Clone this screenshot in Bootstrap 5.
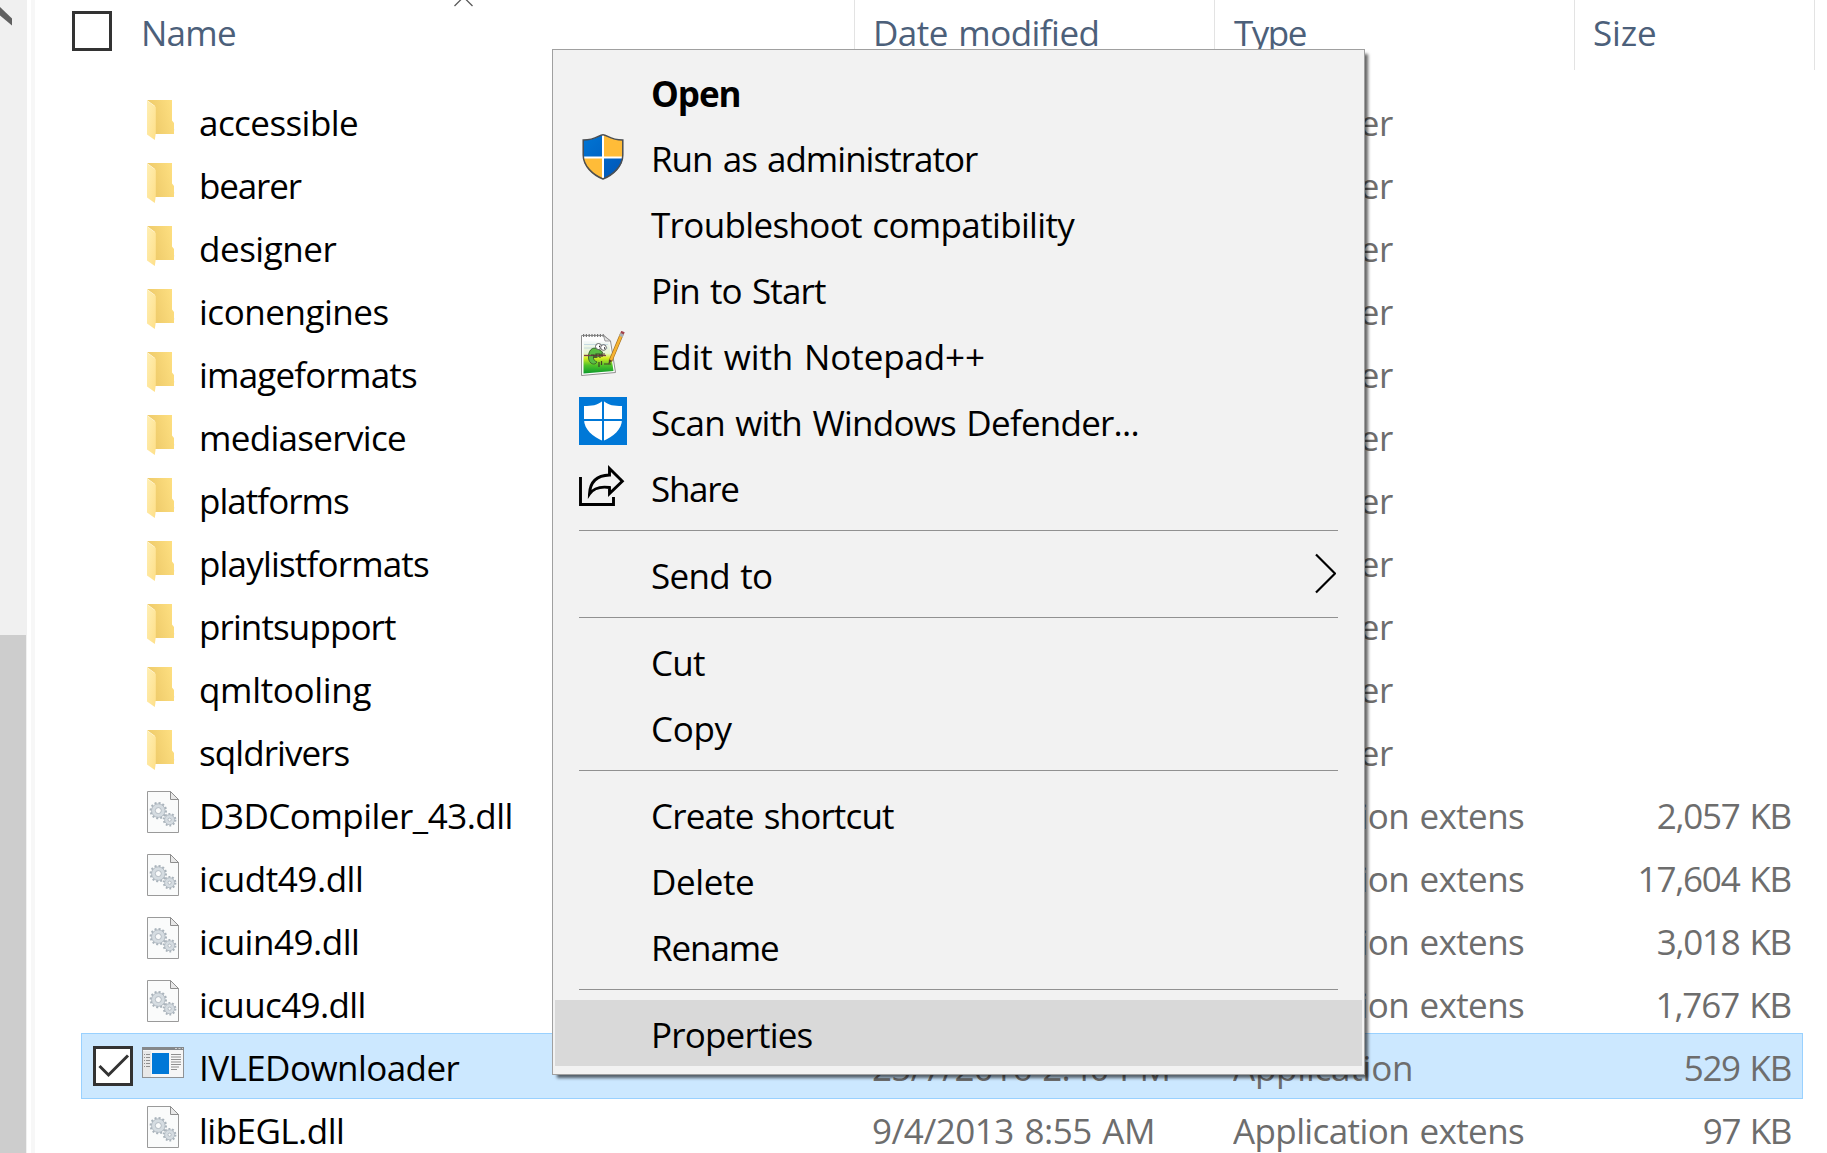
<!DOCTYPE html>
<html lang="en">
<head>
<meta charset="utf-8">
<title>File Explorer</title>
<link href="https://cdn.jsdelivr.net/npm/bootstrap@5.3.0/dist/css/bootstrap.min.css" rel="stylesheet">
<style>
body{font-family:"Open Sans","Noto Sans",sans-serif;font-size:35px;line-height:1;color:#000;background:#fff}
.window{width:1827px;height:1153px}
.track{width:27px;background:#f0f0f0}
.thumb{width:26px;height:518px;background:#cdcdcd}
.pane-edge{width:4px;margin-left:4px;background:#f7f7f7}
.t{white-space:nowrap;line-height:48px;word-spacing:2px}
.head{height:90px;color:#4c607a}
.head-cell{height:70px;border-right:1px solid #e3e3e3;padding-top:9px}
.box{width:40px;height:40px;border:3px solid #333;background:#fff}
.h-name{width:820px;padding-left:37px}
.h-date{width:360px;padding-left:18px}
.h-type{width:360px;padding-left:19px}
.h-size{width:240px;padding-left:18px}
.file{height:63px;margin-left:46px;width:1722px;padding-top:9px;border:0 solid #99d1ff}
.file.active{height:66px;margin-top:-2px;margin-bottom:-1px;background:#cce8ff;border-width:1px;padding-top:10px}
.c-check{width:61px;padding-left:12px}
.active .c-check{width:60px;padding:2px 0 0 11px}
.c-icon{width:57px;height:54px}
.c-icon svg{display:block;margin-top:-9px}
.active .c-icon svg{margin-top:-1px}
.c-name{width:673px}
.c-date{width:361px}
.c-type{width:360px;overflow:hidden}
.c-size{width:198px}
.meta{color:#6d6d6d}
.sort{left:453px;top:-5px}
.ctx{left:552px;top:49px;width:813px;height:1026px;padding:8px 2px;background:#f2f2f2;border:1px solid #a0a0a0;box-shadow:4px 4px 3px -1px rgba(0,0,0,.6)}
.item{height:66px;padding:11px 26px 0 24px}
.item.hot{background:#d9d9d9}
.slot{width:48px;height:48px;margin:-2px 24px 0 0}
.sep{height:1px;margin:10px 24px;background:#919191}
</style>
<script src="https://cdn.jsdelivr.net/npm/bootstrap@5.3.0/dist/js/bootstrap.bundle.min.js"></script>
</head>
<body>
<svg width="0" height="0" class="position-absolute">
<defs>
<linearGradient id="gBack" x1="0" x2="1" y1=".3" y2="0"><stop offset="0" stop-color="#edc968"/><stop offset="1" stop-color="#ffe183"/></linearGradient>
<linearGradient id="gFront" x1="0" x2="1" y1="0" y2="1"><stop offset="0" stop-color="#ffefb4"/><stop offset="1" stop-color="#fedf88"/></linearGradient>
<linearGradient id="gBlue" x1="0" x2="1" y1="0" y2="1"><stop offset="0" stop-color="#0078d7"/><stop offset="1" stop-color="#0052b4"/></linearGradient>
<linearGradient id="gNote" x1="0" x2="0" y1="0" y2="1"><stop offset="0" stop-color="#f4f8fb"/><stop offset=".38" stop-color="#e6f4ce"/><stop offset=".52" stop-color="#d8ee20"/><stop offset=".75" stop-color="#4fc22a"/><stop offset="1" stop-color="#0b9a2c"/></linearGradient>
<symbol id="folder" viewBox="0 0 42 54">
<path d="M8 42 L33 39.500 L31 42 L12 44Z" fill="#ececec"/>
<path d="M5 10H30V30.500L32 33V44H13V16Z" fill="url(#gBack)"/>
<path d="M5 10.500L13.800 17V43L12.800 50L5 44.500Z" fill="url(#gFront)"/>
</symbol>
<symbol id="dll" viewBox="0 0 42 54">
<path d="M5.500 8.500H28.500L36.500 16.500V49.500H5.500Z" fill="#fafbfb" stroke="#9a9a9a"/>
<path d="M28.500 8.500V16.500H36.500Z" fill="#e8e8e8" stroke="#8e8e8e"/>
<g fill="none" stroke="#a9b3bb"><circle cx="16.300" cy="27.600" r="7.600" stroke-width="2.200" stroke-dasharray="2 1.980"/><circle cx="27.600" cy="36.700" r="5.800" stroke-width="2" stroke-dasharray="1.800 1.845"/></g>
<g fill="none" stroke="#d5dce1"><circle cx="16.300" cy="27.600" r="4.900" stroke-width="4"/><circle cx="27.600" cy="36.700" r="3.300" stroke-width="3.600"/></g>
<g fill="none" stroke="#a9b3bb" stroke-width=".8"><circle cx="16.300" cy="27.600" r="6.800"/><circle cx="16.300" cy="27.600" r="3"/><circle cx="27.600" cy="36.700" r="5"/><circle cx="27.600" cy="36.700" r="1.600"/></g>
</symbol>
<symbol id="app" viewBox="0 0 42 54">
<rect x=".5" y="4.500" width="41" height="30" fill="#f6f6f6" stroke="#8f9295"/>
<path d="M0 4H42V7H0Z" fill="#85888b"/><path d="M33 5.500h2m1.500 0h2m1.500 0h1" stroke="#d0d0d0"/>
<path d="M1 8H9V34H1Z" fill="#e8e8e8"/>
<path d="M10 10H27V31H10Z" fill="#0078d7"/>
<path d="M2 11.500h1m1 0h4M2 14.500h1m1 0h4M2 17.500h1m1 0h4M2 20.500h1m1 0h4M2 23.500h1m1 0h4M29 11.500h10M29 14h10M29 16.500h10M29 19h10M29 21.500h10M29 24h8M29 26.500h6" stroke="#8f8f8f" fill="none"/>
</symbol>
</defs>
</svg>

<div class="window d-flex overflow-hidden position-relative">
  <div class="track d-flex flex-column justify-content-between flex-shrink-0">
    <svg width="14" height="30"><path d="M0 7L12 18.500V25.500L0 15.500Z" fill="#606060"/></svg>
    <div class="thumb"></div>
  </div>
  <div class="pane-edge flex-shrink-0"></div>

  <div class="flex-grow-1">
    <div class="head d-flex align-items-start">
      <div class="head-cell h-name d-flex"><div class="box" style="margin-top:2px"></div><div class="t" style="margin-left:29px"><span data-w="91">Name</span></div></div>
      <div class="head-cell h-date t"><span data-w="221.5">Date modified</span></div>
      <div class="head-cell h-type t"><span data-w="71.8">Type</span></div>
      <div class="head-cell h-size t"><span data-w="61">Size</span></div>
    </div>
    <div id="files"></div>
  </div>

  <svg class="sort position-absolute" width="22" height="12"><path d="M1.500 11L10.500 2L19.500 11" fill="none" stroke="#5a5a5a" stroke-width="1.300"/></svg>

  <div class="ctx position-absolute">
    <div class="item d-flex t fw-bold" style="padding-top:12px"><div class="slot"></div><span data-w="86.5">Open</span></div>
    <div class="item d-flex t"><svg class="slot" viewBox="0 0 48 48">
      <clipPath id="shield"><path d="M24 2C19.500 2 17.500 6.800 4 7V22C4 34 13 42 24 46C35 42 44 34 44 22V7C30.500 6.800 28.500 2 24 2Z"/></clipPath>
      <g clip-path="url(#shield)"><path d="M0 0H24V24H0ZM24 24H48V48H24Z" fill="url(#gBlue)"/><path d="M24 0H48V24H24ZM0 24H24V48H0Z" fill="#ffbc38"/><path d="M24 0V48M0 24.500H48" stroke="#fff" stroke-width="2"/></g>
      <path d="M24 1.800C19.500 1.800 17.500 7 4.200 7V22C4.200 33 14 42 24 46C34 42 43.800 33 43.800 22V7C30.500 7 28.500 1.800 24 1.800Z" fill="none" stroke="#4c4f52" stroke-width="1.500"/>
    </svg><span data-w="324">Run as administrator</span></div>
    <div class="item d-flex t"><div class="slot"></div><span data-w="424.3">Troubleshoot compatibility</span></div>
    <div class="item d-flex t"><div class="slot"></div><span data-w="172">Pin to Start</span></div>
    <div class="item d-flex t"><svg class="slot" viewBox="0 0 48 48">
      <path d="M2.500 4.500H25L31.500 10L36.500 41.500L2.500 44.500Z" fill="#fdfdfd" stroke="#8f8f8f"/>
      <path d="M4.500 10L30 11L34.500 40L4.500 42.500Z" fill="url(#gNote)"/>
      <path d="M4 4.500h21" stroke="#777" stroke-width="3" stroke-dasharray="1.200 1.600"/>
      <path d="M24.500 4.500L26 10L31.500 10Z" fill="#e4e4e4" stroke="#888" stroke-width=".8"/>
      <path d="M5 13.500h24M5 17h24" stroke="#bcd3df" stroke-width=".8"/>
      <path d="M19 18C13 15 9 20 9.500 27C10 33 16 35 18 31C16 30 14 29 14.500 26C18 27 23 25 23.500 21Z" fill="#59bd43" stroke="#3f6b2e" stroke-width="1"/>
      <g fill="#fff" stroke="#555" stroke-width=".9"><circle cx="19.500" cy="15.500" r="3"/><circle cx="24.500" cy="16.500" r="2.800"/></g><path d="M20 15.500h1M25 17h1" stroke="#222" stroke-width="1.500"/>
      <path d="M5 24.500H27" stroke="#7d3f4a" stroke-width="1.300"/>
      <path d="M12 24h3v3M17 27v-4h4v4M23 26v-3h3M20 36V31M22.500 34V30M25 33h7" fill="none" stroke="#423e28" stroke-width="1.200"/>
      <path d="M43 2.500L31.500 30" stroke="#9b6a20" stroke-width="3.800"/><path d="M43 2.500L32 29" stroke="#f7b331" stroke-width="2.600"/>
      <path d="M44 .5L43 3" stroke="#a3424c" stroke-width="3.600"/><path d="M43.200 2.800L42 5.500" stroke="#a9b1b7" stroke-width="3.800"/><path d="M30 28.500L32.800 30L29.500 33.500Z" fill="#4f4028"/>
    </svg><span data-w="330">Edit with Notepad++</span></div>
    <div class="item d-flex t"><svg class="slot" viewBox="0 0 48 48"><path d="M0 0H48V48H0Z" fill="#0078d7"/><path d="M24 3.500C18 8.500 13 9 5 9V22C5 33 14 39.500 24 44C34 39.500 43 33 43 22V9C35 9 30 8.500 24 3.500Z" fill="#fff"/><path d="M24 2V46M4 23H44" stroke="#0078d7" stroke-width="2"/></svg><span data-w="485.5">Scan with Windows Defender...</span></div>
    <div class="item d-flex t"><svg class="slot" viewBox="0 0 48 48"><g fill="none" stroke="#000" stroke-width="2.900"><path d="M1.500 14V41.500H34.500V34"/><path d="M30.500 5.500L43.300 18.300L30.500 30.500V24.500C20 23 14 26 10.500 31C11 19 18 12.500 30.500 12Z"/></g></svg><span data-w="86.2">Share</span></div>
    <div class="sep"></div>
    <div class="item d-flex t"><div class="slot"></div><span data-w="120">Send to</span><svg class="ms-auto" width="24" height="44" viewBox="-2 1 24 44"><path d="M2 3.500L21 22.500L2 41.500" fill="none" stroke="#000" stroke-width="2.200"/></svg></div>
    <div class="sep"></div>
    <div class="item d-flex t"><div class="slot"></div><span data-w="52">Cut</span></div>
    <div class="item d-flex t"><div class="slot"></div><span data-w="79.5">Copy</span></div>
    <div class="sep"></div>
    <div class="item d-flex t"><div class="slot"></div><span data-w="241">Create shortcut</span></div>
    <div class="item d-flex t"><div class="slot"></div><span data-w="99">Delete</span></div>
    <div class="item d-flex t"><div class="slot"></div><span data-w="124">Rename</span></div>
    <div class="sep"></div>
    <div class="item hot d-flex t"><div class="slot"></div><span data-w="158.500">Properties</span></div>
  </div>
</div>

<script>
// name, label width, icon, size, size width, date, date width
const files = [
  ["accessible",157,"folder"],["bearer",100.7,"folder"],["designer",136.5,"folder"],["iconengines",187.5,"folder"],
  ["imageformats",216,"folder"],["mediaservice",204,"folder"],["platforms",148,"folder"],["playlistformats",228,"folder"],
  ["printsupport",195,"folder"],["qmltooling",171.5,"folder"],["sqldrivers",149.6,"folder"],
  ["D3DCompiler_43.dll",308.6,"dll","2,057 KB",133],["icudt49.dll",160,"dll","17,604 KB",150],
  ["icuin49.dll",156,"dll","3,018 KB",133],["icuuc49.dll",162.5,"dll","1,767 KB",132],
  ["IVLEDownloader",257.5,"app","529 KB",105,"25/7/2016 2:40 PM",295.6],
  ["libEGL.dll",141,"dll","97 KB",87,"9/4/2013 8:55 AM",280]
];
const kinds = {folder:["File folder",157],dll:["Application extens",291],app:["Application",178]};
const cell = (text, w) => text ? `<span data-w="${w}">${text}</span>` : "";
document.getElementById("files").innerHTML = files.map(([name,w,icon,size,sw,date,dw]) => {
  const on = icon === "app";
  return `<div class="file d-flex t ${on ? "active" : ""}">
    <div class="c-check flex-shrink-0">${on ? '<div class="box"><svg class="d-block" width="34" height="34"><path d="M3.500 17L12.500 26L32 6.500" fill="none" stroke="#333" stroke-width="3"/></svg></div>' : ""}</div>
    <div class="c-icon flex-shrink-0"><svg width="42" height="54"><use href="#${icon}"/></svg></div>
    <div class="c-name flex-shrink-0">${cell(name, w)}</div>
    <div class="c-date meta flex-shrink-0">${cell(date, dw)}</div>
    <div class="c-type meta flex-shrink-0">${cell(...kinds[icon])}</div>
    <div class="c-size meta flex-shrink-0 text-end">${cell(size, sw)}</div>
  </div>`;
}).join("");

// Track each label so that its ink spans the intended width
const pen = document.createElement("canvas").getContext("2d");
document.querySelectorAll("[data-w]").forEach(el => {
  const s = getComputedStyle(el), text = el.textContent;
  pen.font = `${s.fontWeight} ${s.fontSize} ${s.fontFamily}`;
  const m = pen.measureText(text), spaces = text.split(" ").length - 1;
  const ink = m.actualBoundingBoxLeft + m.actualBoundingBoxRight + spaces * parseFloat(s.wordSpacing);
  el.style.letterSpacing = ((el.dataset.w - ink) / (text.length - 1)).toFixed(3) + "px";
});
</script>
</body>
</html>
